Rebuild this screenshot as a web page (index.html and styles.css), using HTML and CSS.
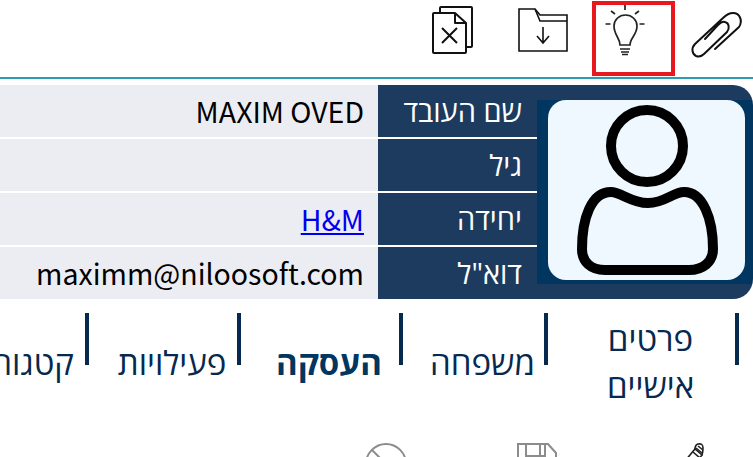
FILE: index.html
```html
<!DOCTYPE html>
<html lang="he" dir="rtl">
  <head>
    <meta charset="UTF-8" />
    <meta name="viewport" content="width=device-width, initial-scale=1.0" />
    <title>Employee Card</title>
    <link rel="stylesheet" href="styles.css">
  </head>
  <body>
    <div class="toolbar">
      <button class="tool tool-clip" type="button">
        <svg width="54" height="50" viewBox="690 10 54 50" fill="none" stroke="#111" stroke-width="2" stroke-linecap="round" stroke-linejoin="round">
          <path d="M715 49 L739 27 C743 21 740 13 733 13 C729 13 726 15 723 18 L695 44 C691 48 692 54 696 56 C699 57 702 56 704 54 L727 32 C730 28 729 23 725 22 C722 21 720 23 718 25 L705 39" />
        </svg>
      </button>
      <button class="tool tool-bulb" type="button">
        <svg width="42" height="52" viewBox="604 5 42 52" fill="none" stroke="#222" stroke-width="1.7" stroke-linecap="butt">
          <path d="M625 5 V10 M611 11 L615 14 M639 11 L635 14 M605.5 24 H610.5 M639.5 24 H644.5" />
          <path d="M620 45 C620 38 614 35 614 26 C614 20 619 15 625.5 15 C632 15 637 20 637 26 C637 35 630 38 630 45 Z" />
          <path d="M620 49 H630 M621 52 H629 M622 54.5 H628" />
        </svg>
      </button>
      <button class="tool tool-folder" type="button">
        <svg width="50" height="46" viewBox="0 0 50 46" fill="none" stroke="#111" stroke-width="1.6">
          <path d="M1 1 H17 L22 7 H49 V43 H1 Z" />
          <path d="M17 1 L22 13 H49" />
          <path d="M25 19 V35 M19 28 L25 35 L31 28" />
        </svg>
      </button>
      <button class="tool tool-file" type="button">
        <svg width="42" height="50" viewBox="0 0 42 50" fill="none" stroke="#111" stroke-width="2" stroke-linejoin="round">
          <path d="M8 8 V3 Q8 2 9 2 H39 Q40 2 40 3 V41 Q40 42 39 42 H34" />
          <path d="M2 8 H23 L34 18 V47 Q34 48 33 48 H2 Q1 48 1 47 V9 Q1 8 2 8 Z" />
          <path d="M23 8 V18 H34" />
          <path d="M10 23 L25 38 M25 23 L10 38" />
        </svg>
      </button>
    </div>

    <div class="card">
      <div class="photo-frame">
        <div class="photo">
          <svg width="148" height="172" viewBox="0 0 148 172" fill="none" stroke="#000" stroke-width="10">
            <circle cx="74" cy="42" r="36" />
            <path d="M38 88 C48 88 58 99 75 99 C92 99 100 88 111 88 C130 88 140 115 140 145 C140 158 130 166 116 166 H32 C18 166 9 158 9 145 C9 115 18 88 38 88 Z" />
          </svg>
        </div>
      </div>
      <div class="rows">
        <div class="row">
          <div class="row-label">שם העובד</div>
          <div class="row-value" dir="ltr">MAXIM OVED</div>
        </div>
        <div class="row">
          <div class="row-label">גיל</div>
          <div class="row-value"></div>
        </div>
        <div class="row">
          <div class="row-label">יחידה</div>
          <div class="row-value" dir="ltr"><a href="#">H&amp;M</a></div>
        </div>
        <div class="row">
          <div class="row-label">דוא"ל</div>
          <div class="row-value" dir="ltr">maximm@niloosoft.com</div>
        </div>
      </div>
    </div>

    <div class="tabs">
      <span class="tab-sep"></span>
      <div class="tab tab-personal">פרטים אישיים</div>
      <span class="tab-sep"></span>
      <div class="tab tab-family">משפחה</div>
      <span class="tab-sep"></span>
      <div class="tab tab-job active">העסקה</div>
      <span class="tab-sep"></span>
      <div class="tab tab-activity">פעילויות</div>
      <span class="tab-sep"></span>
      <div class="tab tab-category">קטגוריות</div>
    </div>

    <div class="actions">
      <svg class="action-edit" width="26" height="30" viewBox="0 0 26 30" fill="none" stroke="#222" stroke-width="1.6">
        <path d="M2 24 L17 6 L24 12 L9 30" />
        <path d="M17 6 Q17 2 20 1 Q25 0 25 5 Q25 9 24 12" />
        <path d="M15 9 L22 15 M18 5 L24 10 M20 3 L25 7" />
      </svg>
      <svg class="action-save" width="40" height="40" viewBox="0 0 40 40" fill="none" stroke="#8c8c8c" stroke-width="2">
        <path d="M1 1 H31 L39 10 V39 H1 Z" />
        <path d="M9 1 V13 H28 V1 M23 1 V13" />
      </svg>
      <svg class="action-ban" width="42" height="42" viewBox="0 0 42 42" fill="none" stroke="#8c8c8c" stroke-width="2">
        <circle cx="21" cy="21" r="20" />
        <path d="M7 7 L35 35" />
      </svg>
    </div>
  </body>
</html>
```

FILE: styles.css
```css
html, body {
  height: 100%;
}

body {
  margin: 0;
  padding: 0;
  background: #fff;
  font-family: "Open Sans", "Noto Sans", sans-serif;
  overflow: hidden;
}

/* top toolbar */
.toolbar {
  display: flex;
  align-items: flex-start;
  height: 77px;
  border-bottom: 2px solid #2f9bb3;
}

.tool {
  display: flex;
  padding: 0;
  border: none;
  background: none;
}

.tool-clip {
  margin-right: 9px;
  margin-left: 15px;
  padding-top: 10px;
}

.tool-bulb {
  box-sizing: border-box;
  width: 83px;
  height: 75px;
  margin-top: 1px;
  padding-right: 25px;
  border: 4px solid #e8181f;
}

.tool-folder {
  margin-right: 24px;
  margin-left: 44px;
  padding-top: 8px;
}

.tool-file {
  padding-top: 5px;
}

/* employee card */
.card {
  display: flex;
  margin-top: 6px;
  height: 214px;
}

.photo-frame {
  width: 216px;
  flex: none;
  box-sizing: border-box;
  padding-top: 15px;
  background: linear-gradient(#003660, #003660) no-repeat 0 15px / 100% 184px #1c3b5e;
  border-radius: 0 20px 20px 0;
}

.photo {
  display: flex;
  justify-content: center;
  align-items: flex-start;
  box-sizing: border-box;
  width: 197px;
  height: 180px;
  margin-right: 8px;
  padding-top: 4px;
  background: #eef8fe;
  border-radius: 18px;
}

.rows {
  flex: 1;
  display: flex;
  flex-direction: column;
  gap: 2px;
}

.row {
  flex: 1;
  display: flex;
}

.row-label {
  width: 159px;
  box-sizing: border-box;
  padding-right: 15px;
  background: #1c3b5e;
  color: #fff;
  font-size: 29px;
  line-height: 52px;
}

.row-value {
  flex: 1;
  padding-right: 14px;
  padding-left: 14px;
  background: #ecedf3;
  color: #000;
  font-family: "Noto Sans CJK SC", "Open Sans", sans-serif;
  font-size: 28.5px;
  line-height: 52px;
  text-align: right;
}

.row-value a {
  color: #0000ee;
}

/* tabs */
.tabs {
  display: flex;
  align-items: center;
  width: 900px;
  height: 98px;
  margin-top: 14px;
  margin-right: 14px;
  color: #06294f;
  font-size: 33px;
  line-height: 47px;
}

.tab-sep {
  flex: none;
  align-self: flex-start;
  width: 4px;
  height: 52px;
  background: #06294f;
}

.tab {
  flex: none;
  box-sizing: border-box;
  padding-left: 18px;
  text-align: center;
}

.tab-personal {
  width: 187px;
  padding-right: 22px;
  padding-left: 40px;
}

.tab-family {
  width: 141px;
}

.tab-job {
  width: 158px;
}

.tab-activity {
  width: 148px;
}

.tab-category {
  width: 180px;
  padding-right: 11px;
  padding-left: 0;
  text-align: right;
}

.tab.active {
  font-weight: 700;
  color: #003660;
}

/* bottom actions, cut by the window */
.actions {
  display: flex;
  align-items: flex-start;
  margin-top: 32px;
  margin-right: 49px;
}

.action-save {
  margin-right: 121px;
}

.action-ban {
  margin-right: 110px;
}
```
